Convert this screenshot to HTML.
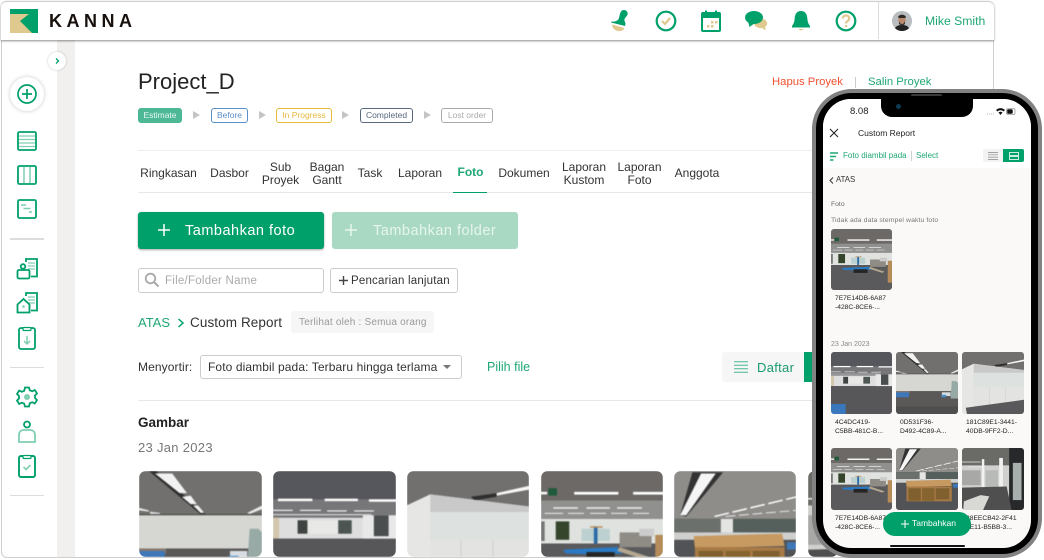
<!DOCTYPE html>
<html><head><meta charset="utf-8">
<style>
html,body{margin:0;padding:0;background:#fff;width:1044px;height:560px;overflow:hidden}
#root{position:absolute;left:0;top:0;width:1044px;height:560px;overflow:hidden;font-family:"Liberation Sans","Noto Sans CJK JP",sans-serif;color:#222}
.a{position:absolute;white-space:nowrap}
.tab{font-size:12px;line-height:13px;color:#333;text-align:center;transform:translateX(-50%)}
.st{position:absolute;top:108px;height:13px;line-height:13px;font-size:8.5px;border-radius:3px;text-align:center;border:1px solid}
.tr{position:absolute;top:111px;width:0;height:0;border-left:7px solid #c4c4c4;border-top:4px solid transparent;border-bottom:4px solid transparent}
.ph{position:absolute;overflow:hidden;border-radius:7px}
.ph svg{display:block;filter:blur(.4px)}
.t{position:absolute;width:61px;height:61px;overflow:hidden;border-radius:3px}
.t svg{display:block;width:100%;height:100%;filter:blur(.3px)}
.cap{position:absolute;font-size:6.7px;line-height:9px;color:#222;white-space:nowrap}
</style></head><body>
<div id="root">
<svg width="0" height="0" style="position:absolute;left:0;top:0">
<defs>
<symbol id="p1" viewBox="0 0 100 100" preserveAspectRatio="none">
<rect width="100" height="100" fill="#5a5958"/>
<rect width="100" height="36" fill="#71706e"/>
<polygon points="8,0 14,0 54,35 51,36" fill="#2e2e2e"/>
<polygon points="13,2 27,2 39,18 33,18" fill="#f2f2f2"/><polygon points="35,21 42,20 47,27 42,27" fill="#f2f2f2"/><polygon points="44,28 48,28 53,34 50,34" fill="#f2f2f2"/>
<polygon points="0,30 8,32 8,33 0,32" fill="#e8e8e8"/><polygon points="9,33 17,34 17,35 9,35" fill="#ddd"/><polygon points="88,34 100,28 100,31 90,35" fill="#e8e8e8"/>
<rect y="35" width="100" height="1" fill="#4a4a4a"/>
<rect y="36" width="100" height="27" fill="#d6d6d2"/>
<rect x="0" y="63" width="22" height="4" fill="#84786e"/><rect x="0" y="65" width="21" height="8" fill="#3f78b8"/><rect x="74" y="65" width="14" height="6" fill="#d7dde2"/><rect x="73" y="69" width="8" height="4" fill="#4a8cc4"/>
<polygon points="90,47 97,47 100,50 100,75 88,75" fill="#98aaa6"/>
<rect x="0" y="88" width="100" height="12" fill="#4e4e4e"/>
</symbol>
<symbol id="p2" viewBox="0 0 100 100" preserveAspectRatio="none">
<rect width="100" height="100" fill="#55555a"/><rect width="100" height="23" fill="#55575c"/><rect y="23" width="100" height="15" fill="#77777a"/>
<rect x="4" y="22.500" width="28" height="2" fill="#fff"/><rect x="42" y="22.500" width="27" height="2" fill="#fff"/><rect x="78" y="23" width="22" height="2" fill="#fff"/>
<rect x="0" y="31.500" width="16" height="1" fill="#eee"/><rect x="22" y="31.500" width="17" height="1" fill="#eee"/><rect x="44" y="32" width="16" height="1" fill="#eee"/><rect x="66" y="32" width="16" height="1" fill="#eee"/>
<rect x="0" y="35" width="80" height="1" fill="#d5d5d5"/>
<rect y="38" width="100" height="17" fill="#dedede"/><rect x="20" y="40" width="44" height="11" fill="#e8e8e6"/><rect x="20" y="40" width="8" height="11" fill="#3f4442"/><rect x="53" y="40" width="11" height="11" fill="#4d5552"/>
<rect x="0" y="38" width="5" height="17" fill="#d2c6ae"/><rect x="73" y="36" width="27" height="20" fill="#e8e8e8"/><rect x="82" y="36" width="12" height="17" fill="#4a4e4e"/>
<rect y="55" width="100" height="45" fill="#57575a"/><rect x="0" y="84" width="24" height="16" fill="#3a78bd"/>
</symbol>
<symbol id="p3" viewBox="0 0 100 100" preserveAspectRatio="none">
<rect width="100" height="100" fill="#dcdedd"/>
<polygon points="0,0 100,0 100,29 19,19 0,28" fill="#72706e"/>
<polygon points="52,21 73,18 73,21 55,24" fill="#2f2f2f"/><polygon points="73,18 100,12 100,15 73,20" fill="#f6f6f6"/>
<polygon points="0,28 19,19 19,100 0,100" fill="#e6e6e4"/>
<polygon points="19,19 100,29 100,33 19,33" fill="#c8c9c8"/>
<rect x="19" y="33" width="81" height="23" fill="#dde1e0"/><rect x="19" y="56" width="81" height="30" fill="#e3e3e1"/>
<path d="M19 33H100M44 56v30M70 56v30" stroke="#bbb" stroke-width=".4"/>
<polygon points="6,90 100,77 100,100 8,100" fill="#59595b"/>
</symbol>
<symbol id="p4" viewBox="0 0 100 100" preserveAspectRatio="none">
<rect width="100" height="100" fill="#5a5a5c"/><rect width="100" height="24" fill="#6c6966"/><rect y="24" width="100" height="15" fill="#90908e"/>
<rect x="0" y="17" width="5" height="2" fill="#fff"/><rect x="27" y="17" width="36" height="2.200" fill="#fff"/><rect x="75" y="17" width="25" height="2.200" fill="#fff"/><rect x="6" y="14" width="7" height="6" fill="#1f5a3a"/>
<rect x="10" y="29.500" width="20" height="1.200" fill="#eee"/><rect x="37" y="29.500" width="19" height="1.200" fill="#eee"/><rect x="62" y="29.500" width="20" height="1.200" fill="#eee"/>
<rect x="3" y="34" width="15" height="1" fill="#ddd"/><rect x="22" y="34" width="13" height="1" fill="#ddd"/><rect x="40" y="34" width="13" height="1" fill="#ddd"/><rect x="57" y="34" width="13" height="1" fill="#ddd"/><rect x="75" y="34" width="13" height="1" fill="#ddd"/>
<rect y="39" width="100" height="20" fill="#e0e2df"/><rect x="0" y="41" width="3" height="16" fill="#777"/>
<rect x="12" y="41" width="11" height="15" fill="#34452c"/><rect x="33" y="47" width="23" height="10" fill="#bcd0cf"/><rect x="43" y="45" width="3" height="14" fill="#2d6ba8"/><rect x="40" y="45" width="10" height="1.200" fill="#b58c5a"/>
<rect x="64" y="50" width="26" height="12" fill="#8f8c86"/><rect x="80" y="47" width="12" height="6" fill="#ccc"/>
<polygon points="18,64 62,62 66,67 44,68 20,67" fill="#2a7ac6"/><rect x="37" y="66" width="23" height="6" fill="#252525"/>
<rect x="93" y="52" width="7" height="36" fill="#b58c5a"/><polygon points="64,62 88,70 84,72 62,65" fill="#b3a78f"/>
</symbol>
<symbol id="p5" viewBox="0 0 100 100" preserveAspectRatio="none">
<rect width="100" height="100" fill="#525356"/><polygon points="0,0 100,0 100,39 0,39" fill="#8f8d8a"/>
<polygon points="15,1 40,1 10,37 5,36" fill="#333"/><polygon points="22,2 34,2 10,36 5,36" fill="#f5f5f5"/>
<path d="M33 37L100 21" stroke="#fff" stroke-width="1.200" stroke-dasharray="12 3"/><path d="M42 37L100 32" stroke="#e8e8e8" stroke-width=".8" stroke-dasharray="8 3"/>
<rect y="39" width="100" height="14" fill="#55605c"/><rect x="38" y="39" width="10" height="14" fill="#e4e4e2"/><rect x="0" y="39" width="38" height="14" fill="#6b706c"/><rect x="0" y="50" width="100" height="6" fill="#cfd0ce"/>
<polygon points="16,53 88,51 90,61 17,63" fill="#c79a62"/><rect x="17" y="62" width="73" height="24" fill="#a87a45"/>
<rect x="20" y="65" width="20" height="20" fill="#80602f"/><rect x="42" y="65" width="20" height="20" fill="#86642f"/><rect x="64" y="65" width="22" height="18" fill="#80602f"/>
<rect x="92" y="58" width="8" height="6" fill="#3f78b8"/>
</symbol>
<symbol id="p6" viewBox="0 0 100 100" preserveAspectRatio="none">
<rect width="100" height="100" fill="#d0d1cf"/><rect width="100" height="28" fill="#6a6a66"/>
<rect x="0" y="22" width="30" height="1.200" fill="#eee"/><rect x="10" y="30" width="28" height="1" fill="#eee"/>
<rect x="32" y="18" width="4" height="60" fill="#f2f2f2"/><rect x="60" y="16" width="6" height="66" fill="#f0f0f0"/><rect x="0" y="36" width="30" height="24" fill="#a8a9a6"/><rect x="38" y="36" width="20" height="30" fill="#b8bab8"/>
<rect x="76" y="0" width="24" height="100" fill="#26282a"/><rect x="82" y="24" width="14" height="60" fill="#a8b0ae"/>
<polygon points="0,64 72,62 80,100 0,100" fill="#4f4f4f"/><polygon points="3,86 30,76 44,78 34,100 2,100" fill="#d8d8d4"/>
</symbol>
</defs></svg>

<!-- app frame -->
<div class="a" style="left:1px;top:1px;width:991px;height:555px;border:1px solid #cfcfcf;border-radius:6px;background:#fff"></div>
<div class="a" style="left:57px;top:40px;width:18px;height:517px;background:#f1f0ee"></div>

<!-- header -->
<div class="a" style="left:1px;top:1px;width:993px;height:38px;background:#fff;border-radius:6px 6px 0 0;border-top:1px solid #cfcfcf;box-shadow:0 1px 2px rgba(0,0,0,.45)"></div>
<svg class="a" style="left:10px;top:9px" width="28" height="24" viewBox="0 0 28 24">
<rect width="28" height="24" fill="#dfc98f"/><polygon points="0,0 28,0 28,24 22,24 10,12 19,5 0,5" fill="#00a06a"/>
</svg>
<div class="a" style="left:49px;top:11px;font-size:18px;line-height:20px;font-weight:bold;color:#17100c;letter-spacing:4.5px">KANNA</div>

<!-- header icons -->
<svg class="a" style="left:609px;top:9px" width="24" height="24" viewBox="0 0 24 24">
<path d="M13 1.500c3-1.500 6.500 1 5.500 4-.6 2-2.500 3-3 4.500-.3 1 .2 2.500 1 4.500L16 17 2 13.500l.5-1c3 .5 5.500-.5 6.800-2 1.500-2 1-7 3.700-9z" fill="#00a06a"/>
<path d="M3 15.500l12.500 3.500c-1 2.500-3.500 3.500-6.500 3-3-.5-6-3-6-6.500z" fill="#dfc98f"/></svg>
<svg class="a" style="left:655px;top:10px" width="22" height="22" viewBox="0 0 22 22"><circle cx="11" cy="11" r="9.300" fill="none" stroke="#00a06a" stroke-width="2.200"/><path d="M7 11l3 3 5-6" fill="none" stroke="#dfc98f" stroke-width="2.200"/></svg>
<svg class="a" style="left:700px;top:9px" width="22" height="24" viewBox="0 0 22 24"><rect x="2" y="4" width="18" height="18" rx="1" fill="none" stroke="#00a06a" stroke-width="2"/><rect x="2" y="4" width="18" height="5" fill="#00a06a"/><rect x="5" y="1.500" width="2" height="4" fill="#00a06a"/><rect x="15" y="1.500" width="2" height="4" fill="#00a06a"/><g fill="#dfc98f"><rect x="11" y="12" width="2.500" height="2.500"/><rect x="15" y="12" width="2.500" height="2.500"/><rect x="7" y="16" width="2.500" height="2.500"/><rect x="11" y="16" width="2.500" height="2.500"/></g></svg>
<svg class="a" style="left:744px;top:10px" width="24" height="22" viewBox="0 0 24 22"><path d="M12 10c3-2.500 10-1.500 11 2.500.5 2-.5 3.500-2 4.500l1 3.500-4-2.500c-3 .5-7-1-8-4z" fill="#dfc98f"/><ellipse cx="10" cy="7.500" rx="9" ry="6.500" fill="#00a06a"/><path d="M4 11l1.500 6 5.500-4z" fill="#00a06a"/></svg>
<svg class="a" style="left:792px;top:10px" width="18" height="22" viewBox="0 0 18 22"><path d="M9 1c4 0 6 3 6.300 7 .2 4 1.200 6 2.700 8v1.500H0V16c1.500-2 2.500-4 2.700-8C3 4 5 1 9 1z" fill="#00a06a"/><path d="M6.500 19h5c-.5 1.800-4.500 1.800-5 0z" fill="#dfc98f"/></svg>
<svg class="a" style="left:835px;top:10px" width="22" height="22" viewBox="0 0 22 22"><circle cx="11" cy="11" r="9.300" fill="none" stroke="#00a06a" stroke-width="2.200"/><path d="M7.800 8.500c0-4 6.500-4 6.500 0 0 2.500-3.300 2.500-3.300 5" fill="none" stroke="#dfc98f" stroke-width="2.200"/><rect x="10" y="15" width="2.200" height="2.200" fill="#dfc98f"/></svg>
<div class="a" style="left:878px;top:2px;width:1px;height:37px;background:#ddd"></div>
<svg class="a" style="left:892px;top:11px" width="20" height="20" viewBox="0 0 20 20"><defs><clipPath id="av"><circle cx="10" cy="10" r="10"/></clipPath></defs><g clip-path="url(#av)"><rect width="20" height="20" fill="#b9bdbf"/><path d="M2 20c1-5 4-6 8-6s7 1 8 6z" fill="#222"/><ellipse cx="10" cy="8.500" rx="3.800" ry="5" fill="#b98a70"/><path d="M6 6c1-3 7-3 8 0l-1 1H7z" fill="#2d2a28"/><path d="M7 10c1 4 5 4 6 0v3l-3 2-3-2z" fill="#3a3330"/></g></svg>
<div class="a" style="left:925px;top:13px;font-size:12.2px;line-height:16px;color:#1fa774">Mike Smith</div>

<!-- sidebar -->
<div class="a" style="left:48px;top:52px;width:18px;height:18px;border-radius:50%;background:#fff;box-shadow:0 0 2px rgba(0,0,0,.25)"></div>
<svg class="a" style="left:53px;top:57px" width="8" height="8" viewBox="0 0 8 8"><path d="M3 1.500L5.500 4 3 6.500" fill="none" stroke="#00a06a" stroke-width="1.300"/></svg>
<div class="a" style="left:10px;top:77px;width:34px;height:34px;border-radius:50%;background:#fff;box-shadow:0 0 4px rgba(0,0,0,.22)"></div>
<svg class="a" style="left:17px;top:84px" width="20" height="20" viewBox="0 0 20 20"><circle cx="10" cy="10" r="9" fill="none" stroke="#00a06a" stroke-width="1.700"/><path d="M10 5v10M5 10h10" stroke="#00a06a" stroke-width="1.700"/></svg>

<svg class="a" style="left:16px;top:130px" width="22" height="22" viewBox="0 0 22 22"><rect x="2" y="2" width="18" height="18" rx="1.500" fill="none" stroke="#00a06a" stroke-width="1.800"/><path d="M3 6h16M3 9.500h16M3 13h16M3 16.500h16" stroke="#7fcfb0" stroke-width="1.300"/></svg>
<svg class="a" style="left:16px;top:164px" width="22" height="22" viewBox="0 0 22 22"><rect x="2" y="2" width="18" height="18" rx="1.500" fill="none" stroke="#00a06a" stroke-width="1.800"/><path d="M8 3v16M14 3v16" stroke="#7fcfb0" stroke-width="1.500"/></svg>
<svg class="a" style="left:16px;top:198px" width="22" height="22" viewBox="0 0 22 22"><rect x="2" y="2" width="18" height="18" rx="1.500" fill="none" stroke="#00a06a" stroke-width="1.800"/><path d="M5 7h5M7.500 10.500h7M13 14h3" stroke="#7fcfb0" stroke-width="1.500"/></svg>
<div class="a" style="left:10px;top:238px;width:34px;height:1.500px;background:#ddd"></div>
<svg class="a" style="left:16px;top:257px" width="23" height="23" viewBox="0 0 23 23"><path d="M10 5V2h11v17.500h-6" fill="none" stroke="#00a06a" stroke-width="1.800"/><path d="M12 6h7M12 9h7M12 12h7" stroke="#7fcfb0" stroke-width="1.300"/><circle cx="7" cy="9.500" r="2.300" fill="none" stroke="#00a06a" stroke-width="1.800"/><rect x="1.500" y="13" width="12" height="8.500" rx="1.500" fill="none" stroke="#00a06a" stroke-width="1.800"/></svg>
<svg class="a" style="left:16px;top:291px" width="23" height="23" viewBox="0 0 23 23"><path d="M10 5V2h11v17.500h-6" fill="none" stroke="#00a06a" stroke-width="1.800"/><path d="M12 6h7M12 9h7M12 12h7" stroke="#7fcfb0" stroke-width="1.300"/><path d="M1.500 21.500v-8L7.500 8l6 5.500v8z" fill="#fff" stroke="#00a06a" stroke-width="1.800"/><circle cx="7.500" cy="15.500" r="1.300" fill="#7fcfb0"/></svg>
<svg class="a" style="left:17px;top:326px" width="20" height="24" viewBox="0 0 20 24"><rect x="2" y="2" width="16" height="21" rx="2" fill="none" stroke="#00a06a" stroke-width="1.800"/><rect x="6" y="1.500" width="8" height="3" rx="1" fill="#fff" stroke="#00a06a" stroke-width="1.200"/><path d="M10 10v8M7 15l3 3 3-3" fill="none" stroke="#7fcfb0" stroke-width="1.500"/></svg>
<div class="a" style="left:10px;top:367px;width:34px;height:1px;background:#ddd"></div>
<svg class="a" style="left:16px;top:386px" width="22" height="22" viewBox="0 0 22 22"><path d="M9 1.500h4l.8 2.800 2.400 1 2.600-1.300 2.200 3.500-2 2v2.500l2 2-2.200 3.500-2.600-1.300-2.400 1L13 20.500H9l-.8-2.800-2.400-1-2.600 1.300L1 14.500l2-2V10L1 8l2.200-3.500 2.600 1.300 2.400-1z" fill="none" stroke="#00a06a" stroke-width="1.800"/><circle cx="11" cy="11" r="3" fill="#7fcfb0"/></svg>
<svg class="a" style="left:17px;top:420px" width="20" height="24" viewBox="0 0 20 24"><circle cx="10" cy="4.500" r="3" fill="none" stroke="#00a06a" stroke-width="1.800"/><path d="M2 22v-7c0-3 2-5 5-5h6c3 0 5 2 5 5v7z" fill="none" stroke="#7fcfb0" stroke-width="1.800"/></svg>
<svg class="a" style="left:17px;top:454px" width="20" height="24" viewBox="0 0 20 24"><rect x="2" y="2" width="16" height="21" rx="2" fill="none" stroke="#00a06a" stroke-width="1.900"/><rect x="6" y="1.500" width="8" height="3" rx="1" fill="#fff" stroke="#00a06a" stroke-width="1.200"/><path d="M6.500 13l2.500 2.500 4.500-4.500" fill="none" stroke="#7fcfb0" stroke-width="1.600"/></svg>
<div class="a" style="left:10px;top:495px;width:34px;height:1px;background:#ddd"></div>

<!-- project -->
<div class="a" style="left:138px;top:69px;font-size:22px;line-height:26px;color:#222">Project_D</div>
<div class="a" style="left:772px;top:75px;font-size:11.3px;line-height:15px;color:#f0512f">Hapus Proyek</div>
<div class="a" style="left:855px;top:77px;width:1px;height:11px;background:#ccc"></div>
<div class="a" style="left:868px;top:75px;font-size:11.3px;line-height:15px;color:#1fa774">Salin Proyek</div>

<div class="st" style="left:138px;width:42px;background:#4db896;border-color:#4db896;color:#e8f7f1">Estimate</div><div class="tr" style="left:193px"></div>
<div class="st" style="left:211px;width:35px;border-color:#5b8fc8;color:#5b8fc8">Before</div><div class="tr" style="left:259px"></div>
<div class="st" style="left:276px;width:54px;border-color:#e7b93e;color:#e7b93e">In Progress</div><div class="tr" style="left:342px"></div>
<div class="st" style="left:360px;width:51px;border-color:#5a6a7e;color:#5a6a7e">Completed</div><div class="tr" style="left:424px"></div>
<div class="st" style="left:441px;width:50px;border-color:#aaa;color:#aaa">Lost order</div>

<!-- tabs -->
<div class="a" style="left:138px;top:150px;width:680px;height:1px;background:#eee"></div>
<div class="a" style="left:138px;top:192px;width:680px;height:1px;background:#e8e8e8"></div>
<div class="a tab" style="left:168.500px;top:167px">Ringkasan</div>
<div class="a tab" style="left:229.500px;top:167px">Dasbor</div>
<div class="a tab" style="left:280.500px;top:161px">Sub<br>Proyek</div>
<div class="a tab" style="left:327px;top:161px">Bagan<br>Gantt</div>
<div class="a tab" style="left:370px;top:167px">Task</div>
<div class="a tab" style="left:420px;top:167px">Laporan</div>
<div class="a tab" style="left:470.500px;top:166px;color:#1fa774;font-weight:bold">Foto</div>
<div class="a" style="left:453px;top:192px;width:34px;height:1px;background:#00a06a"></div>
<div class="a tab" style="left:524px;top:167px">Dokumen</div>
<div class="a tab" style="left:584px;top:161px">Laporan<br>Kustom</div>
<div class="a tab" style="left:639.500px;top:161px">Laporan<br>Foto</div>
<div class="a tab" style="left:697px;top:167px">Anggota</div>

<!-- buttons -->
<div class="a" style="left:138px;top:212px;width:186px;height:37px;background:#00a06a;border-radius:3px;box-shadow:0 1px 2px rgba(0,0,0,.35)"></div>
<svg class="a" style="left:158px;top:224px" width="12" height="12"><path d="M6 0v12M0 6h12" stroke="#fff" stroke-width="1.500"/></svg>
<div class="a" style="left:185px;top:223px;font-size:14.500px;line-height:17px;color:#fff;letter-spacing:.5px">Tambahkan foto</div>
<div class="a" style="left:332px;top:212px;width:186px;height:37px;background:#aad9c3;border-radius:3px"></div>
<svg class="a" style="left:345px;top:224px" width="12" height="12"><path d="M6 0v12M0 6h12" stroke="#e6f5ee" stroke-width="1.500"/></svg>
<div class="a" style="left:373px;top:223px;font-size:14.500px;line-height:17px;color:#e6f5ee;letter-spacing:.5px">Tambahkan folder</div>

<!-- search -->
<div class="a" style="left:138px;top:268px;width:184px;height:23px;border:1px solid #ccc;border-radius:3px"></div>
<svg class="a" style="left:144px;top:272px" width="16" height="16" viewBox="0 0 16 16"><circle cx="6.500" cy="6.500" r="4.800" fill="none" stroke="#aaa" stroke-width="1.800"/><path d="M10 10l4.500 4.500" stroke="#aaa" stroke-width="2"/></svg>
<div class="a" style="left:165px;top:274px;font-size:11.500px;line-height:15px;color:#aaa;letter-spacing:.25px">File/Folder Name</div>
<div class="a" style="left:330px;top:268px;width:126px;height:23px;border:1px solid #ccc;border-radius:3px"></div>
<svg class="a" style="left:339px;top:276px" width="9" height="9"><path d="M4.500 0v9M0 4.500h9" stroke="#444" stroke-width="1.400"/></svg>
<div class="a" style="left:351px;top:274px;font-size:11.500px;line-height:15px;color:#333;letter-spacing:.2px">Pencarian lanjutan</div>

<!-- breadcrumbs -->
<div class="a" style="left:138px;top:315px;font-size:13px;line-height:16px;color:#1fa774">ATAS</div>
<svg class="a" style="left:177px;top:318px" width="8" height="10"><path d="M1.500 1L6 5 1.500 9" fill="none" stroke="#00a06a" stroke-width="1.500"/></svg>
<div class="a" style="left:190px;top:315px;font-size:13.500px;line-height:16px;color:#333;letter-spacing:.1px">Custom Report</div>
<div class="a" style="left:291px;top:311px;width:143px;height:22px;background:#f6f6f6;border-radius:3px"></div>
<div class="a" style="left:299px;top:317px;font-size:10px;line-height:12px;color:#999;letter-spacing:.2px">Terlihat oleh : Semua orang</div>

<!-- sort -->
<div class="a" style="left:138px;top:360px;font-size:12px;line-height:15px;color:#333;letter-spacing:.1px">Menyortir:</div>
<div class="a" style="left:200px;top:355px;width:260px;height:22px;border:1px solid #ccc;border-radius:3px"></div>
<div class="a" style="left:208px;top:360px;font-size:12px;line-height:15px;color:#333;letter-spacing:.1px">Foto diambil pada: Terbaru hingga terlama</div>
<div class="a" style="left:443px;top:365px;width:0;height:0;border-top:4px solid #777;border-left:4px solid transparent;border-right:4px solid transparent"></div>
<div class="a" style="left:487px;top:360px;font-size:12.500px;line-height:15px;color:#1fa774">Pilih file</div>
<div class="a" style="left:722px;top:352px;width:82px;height:30px;background:#f6f6f6;border-radius:3px 0 0 3px"></div>
<div class="a" style="left:804px;top:352px;width:10px;height:30px;background:#00a06a"></div>
<svg class="a" style="left:734px;top:361px" width="14" height="12"><path d="M0 .700h14M0 4.200h14M0 7.700h14M0 11.200h14" stroke="#49b88f" stroke-width="1"/></svg>
<div class="a" style="left:757px;top:360px;font-size:13px;line-height:15px;color:#1a9a6c;letter-spacing:.3px">Daftar</div>

<div class="a" style="left:138px;top:400px;width:680px;height:1px;background:#e8e8e8"></div>
<div class="a" style="left:138px;top:414px;font-size:13.500px;line-height:17px;color:#222;font-weight:bold">Gambar</div>
<div class="a" style="left:138px;top:440px;font-size:13px;line-height:16px;color:#777;letter-spacing:.3px">23 Jan 2023</div>

<!-- photos -->
<div class="ph" style="left:139px;top:471px;width:123px;height:86px"><svg width="123" height="86" viewBox="0 0 100 70" preserveAspectRatio="xMinYMin slice"><use href="#p1" width="100" height="100"/></svg></div>
<div class="ph" style="left:273px;top:471px;width:123px;height:86px"><svg width="123" height="86" viewBox="0 0 100 70" preserveAspectRatio="xMinYMin slice"><use href="#p2" width="100" height="100"/></svg></div>
<div class="ph" style="left:407px;top:471px;width:122px;height:86px"><svg width="122" height="86" viewBox="0 0 100 70" preserveAspectRatio="xMinYMin slice"><use href="#p3" width="100" height="100"/></svg></div>
<div class="ph" style="left:541px;top:471px;width:122px;height:86px"><svg width="122" height="86" viewBox="0 0 100 70" preserveAspectRatio="xMinYMin slice"><use href="#p4" width="100" height="100"/></svg></div>
<div class="ph" style="left:674px;top:471px;width:122px;height:86px"><svg width="122" height="86" viewBox="0 0 100 70" preserveAspectRatio="xMinYMin slice"><use href="#p5" width="100" height="100"/></svg></div>
<div class="ph" style="left:808px;top:471px;width:30px;height:86px"><svg width="30" height="86" viewBox="0 0 24.400 70" preserveAspectRatio="xMinYMin slice"><use href="#p6" width="100" height="100"/></svg></div>

<!-- phone -->
<div class="a" style="left:812px;top:89px;width:222px;height:461px;border:4px solid #828282;border-radius:40px;background:#000"></div>
<div class="a" style="left:823px;top:99px;width:208px;height:449px;background:#faf9f7;border-radius:28px;overflow:hidden">
  <div style="position:absolute;left:0;top:0;width:208px;height:69px;background:#fff"></div>
</div>
<div class="a" style="left:881px;top:97px;width:92px;height:20px;background:#000;border-radius:0 0 11px 11px"></div>
<div class="a" style="left:911px;top:94px;width:31px;height:2px;background:#3a3a3a;border-radius:1px"></div>
<div class="a" style="left:896px;top:104px;width:5px;height:5px;border-radius:50%;background:#0d3a55"></div>
<div class="a" style="left:850px;top:106px;font-size:9.500px;line-height:11px;color:#222">8.08</div>
<svg class="a" style="left:987px;top:107px" width="30" height="9" viewBox="0 0 30 9"><path d="M0 7h1M2 7h1M4 7h1M6 7h1" stroke="#bbb" stroke-width="1"/><path d="M9 3c3-2.500 6-2.500 9 0l-1.500 1.500c-2-1.600-4-1.600-6 0zM11.500 5.500c1.500-1 2.500-1 4 0L13.500 8z" fill="#111"/><rect x="19.500" y="1.500" width="8.500" height="6" rx="1.500" fill="#fff" stroke="#777" stroke-width=".6"/><rect x="20.200" y="2.200" width="5.500" height="4.600" rx="1" fill="#111"/></svg>
<svg class="a" style="left:829px;top:128px" width="10" height="10"><path d="M1 1l8 8M9 1l-8 8" stroke="#222" stroke-width="1.100"/></svg>
<div class="a" style="left:858px;top:128px;font-size:8.500px;line-height:11px;color:#222">Custom Report</div>
<svg class="a" style="left:830px;top:152px" width="9" height="9"><path d="M0 1h8M0 4.500h6M0 8h3.500" stroke="#1fa774" stroke-width="1.400"/></svg>
<div class="a" style="left:843px;top:151px;font-size:8px;line-height:10px;color:#1fa774">Foto diambil pada</div>
<div class="a" style="left:911px;top:151px;width:1px;height:10px;background:#cfcfcf"></div>
<div class="a" style="left:916px;top:151px;font-size:8px;line-height:10px;color:#1fa774">Select</div>
<div class="a" style="left:983px;top:149px;width:21px;height:13px;background:#f3f3f3;border-radius:2px 0 0 2px"></div>
<div class="a" style="left:1003px;top:149px;width:21px;height:13px;background:#00a06a;border-radius:0 2px 2px 0"></div>
<svg class="a" style="left:988px;top:152px" width="10" height="8"><path d="M0 .500h10M0 2.800h10M0 5.100h10M0 7.400h10" stroke="#888" stroke-width=".7"/></svg>
<svg class="a" style="left:1009px;top:152px" width="10" height="8"><rect x=".5" y=".5" width="9" height="3" fill="none" stroke="#fff" stroke-width=".8"/><rect x=".5" y="4.500" width="9" height="3" fill="none" stroke="#fff" stroke-width=".8"/></svg>
<svg class="a" style="left:829px;top:177px" width="5" height="7"><path d="M4 .5L1 3.500 4 6.500" fill="none" stroke="#333" stroke-width="1"/></svg>
<div class="a" style="left:836px;top:175px;font-size:7.800px;line-height:10px;color:#333">ATAS</div>
<div class="a" style="left:831px;top:200px;font-size:6.800px;line-height:9px;color:#666">Foto</div>
<div class="a" style="left:831px;top:216px;font-size:6.800px;line-height:9px;color:#777;letter-spacing:.12px">Tidak ada data stempel waktu foto</div>

<div class="t" style="left:831px;top:229px"><svg viewBox="0 0 100 100" preserveAspectRatio="none"><use href="#p4" width="100" height="100"/></svg></div>
<div class="cap" style="left:835px;top:294px">7E7E14DB-6A87<br>-428C-8CE6-...</div>
<div class="a" style="left:831px;top:340px;font-size:7px;line-height:9px;color:#888">23 Jan 2023</div>

<div class="t" style="left:831px;top:352px;height:62px"><svg viewBox="0 0 100 100" preserveAspectRatio="none"><use href="#p2" width="100" height="100"/></svg></div>
<div class="t" style="left:896px;top:352px;height:62px;width:62px"><svg viewBox="0 0 100 100" preserveAspectRatio="none"><use href="#p1" width="100" height="100"/></svg></div>
<div class="t" style="left:962px;top:352px;height:62px;width:62px"><svg viewBox="0 0 100 100" preserveAspectRatio="none"><use href="#p3" width="100" height="100"/></svg></div>
<div class="cap" style="left:835px;top:418px">4C4DC419-<br>C5BB-481C-B...</div>
<div class="cap" style="left:900px;top:418px">0D531F36-<br>D492-4C89-A...</div>
<div class="cap" style="left:966px;top:418px">181C89E1-3441-<br>40DB-9FF2-D...</div>

<div class="t" style="left:831px;top:448px;height:62px"><svg viewBox="0 0 100 100" preserveAspectRatio="none"><use href="#p4" width="100" height="100"/></svg></div>
<div class="t" style="left:896px;top:448px;height:62px;width:62px"><svg viewBox="0 0 100 100" preserveAspectRatio="none"><use href="#p5" width="100" height="100"/></svg></div>
<div class="t" style="left:962px;top:448px;height:62px;width:62px"><svg viewBox="0 0 100 100" preserveAspectRatio="none"><use href="#p6" width="100" height="100"/></svg></div>
<div class="cap" style="left:835px;top:514px">7E7E14DB-6A87<br>-428C-8CE6-...</div>
<div class="cap" style="left:966px;top:514px">88EECB42-2F41<br>4E11-B5BB-3...</div>

<div class="a" style="left:883px;top:512px;width:88px;height:24px;background:#00a06a;border-radius:12px"></div>
<svg class="a" style="left:901px;top:520px" width="8" height="8"><path d="M4 0v8M0 4h8" stroke="#fff" stroke-width="1"/></svg>
<div class="a" style="left:912px;top:518px;font-size:8.500px;line-height:11px;color:#fff">Tambahkan</div>
<div class="a" style="left:890px;top:545px;width:75px;height:2px;background:#111;border-radius:1px"></div>
</div>
</body></html>
